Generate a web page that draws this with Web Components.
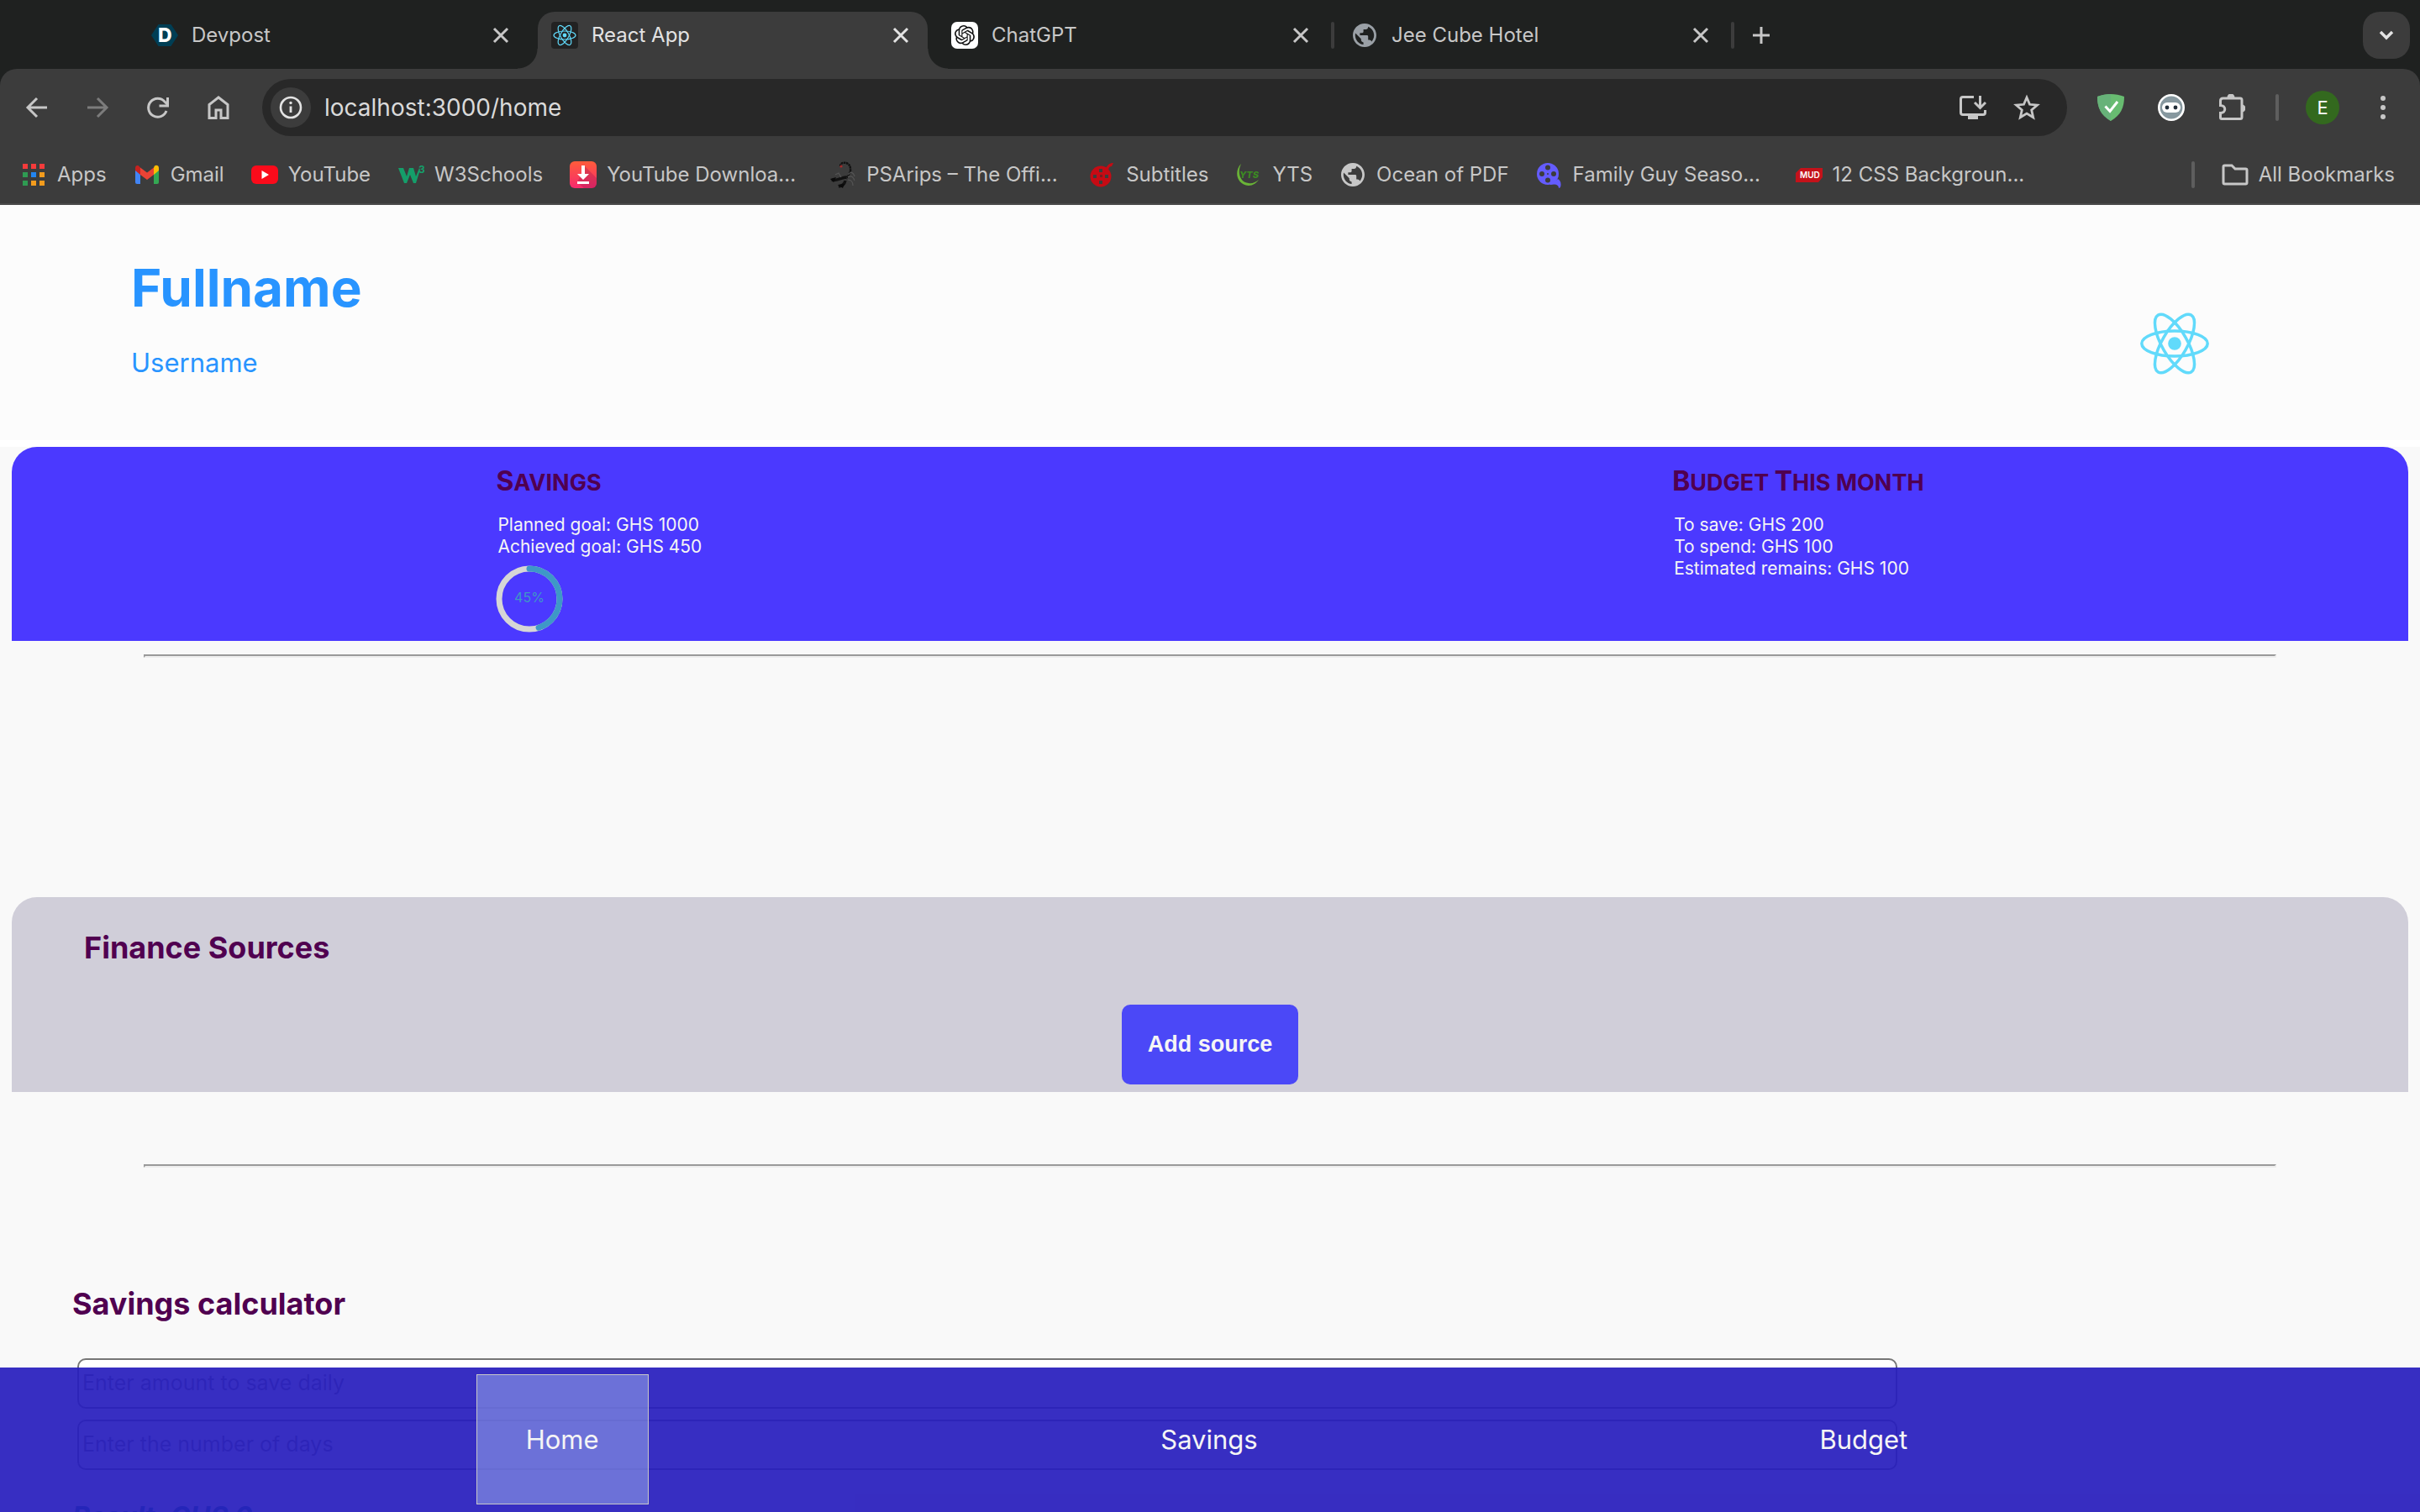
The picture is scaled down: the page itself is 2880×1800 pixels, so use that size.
<!DOCTYPE html>
<html lang="en">
<head>
<meta charset="utf-8">
<title>React App</title>
<style>
    body {
        margin: 0;
        font-family: Inter, "Liberation Sans", sans-serif;
        background: #f9f9f9;
    }
</style>
</head>
<body>
<app-window>
    <tab-strip slot="chrome">
        <browser-tab icon="devpost" label="Devpost"></browser-tab>
        <tab-divider></tab-divider>
        <browser-tab icon="react" label="React App" active></browser-tab>
        <tab-divider></tab-divider>
        <browser-tab icon="chatgpt" label="ChatGPT"></browser-tab>
        <tab-divider visible></tab-divider>
        <browser-tab icon="globe" label="Jee Cube Hotel"></browser-tab>
        <tab-divider visible></tab-divider>
    </tab-strip>
    <browser-toolbar slot="chrome" url="localhost:3000/home"></browser-toolbar>
    <bookmark-bar slot="chrome">
        <bookmark-link icon="apps">Apps</bookmark-link>
        <bookmark-link icon="gmail">Gmail</bookmark-link>
        <bookmark-link icon="youtube">YouTube</bookmark-link>
        <bookmark-link icon="w3">W3Schools</bookmark-link>
        <bookmark-link icon="downloader" clipped>YouTube Downloa...</bookmark-link>
        <bookmark-link icon="scorpion" clipped>PSArips – The Offi...</bookmark-link>
        <bookmark-link icon="subtitles">Subtitles</bookmark-link>
        <bookmark-link icon="yts">YTS</bookmark-link>
        <bookmark-link icon="globe">Ocean of PDF</bookmark-link>
        <bookmark-link icon="reel" clipped>Family Guy Seaso...</bookmark-link>
        <bookmark-link icon="muo" clipped>12 CSS Backgroun...</bookmark-link>
        <bookmark-link icon="folder" slot="end">All Bookmarks</bookmark-link>
    </bookmark-bar>

    <profile-header fullname="Fullname" username="Username"></profile-header>
    <summary-card>
        <summary-section header="Savings">
            <li>Planned goal: GHS 1000</li>
            <li>Achieved goal: GHS 450</li>
            <progress-ring slot="extra" value="45"></progress-ring>
        </summary-section>
        <summary-section header="Budget This month">
            <li>To save: GHS 200</li>
            <li>To spend: GHS 100</li>
            <li>Estimated remains: GHS 100</li>
        </summary-section>
    </summary-card>
    <page-rule></page-rule>
    <finance-sources></finance-sources>
    <page-rule class="second"></page-rule>
    <savings-calculator></savings-calculator>

    <bottom-nav slot="nav"></bottom-nav>
</app-window>

<script>
const atom = (rx, ry, stroke, r) => `
    <g fill="none" stroke="#61dafb" stroke-width="${stroke}">
        <ellipse rx="${rx}" ry="${ry}"/>
        <ellipse rx="${rx}" ry="${ry}" transform="rotate(60)"/>
        <ellipse rx="${rx}" ry="${ry}" transform="rotate(120)"/>
    </g>
    <circle r="${r}" fill="#61dafb"/>`;

// every icon is drawn on a 32 x 32 grid
const icons = {
    back: '<path d="M28 16H6M16 5 5 16l11 11" fill="none" stroke="currentColor" stroke-width="3"/>',
    forward: '<path d="M4 16h22M16 5l11 11-11 11" fill="none" stroke="currentColor" stroke-width="3"/>',
    reload: '<path d="M26 20a11 11 0 1 1-2-11l3 3" fill="none" stroke="currentColor" stroke-width="3"/><path d="M27.5 4v10h-10" fill="none" stroke="currentColor" stroke-width="3"/>',
    home: '<path d="M5 28.5V12.5L16 4l11 8.5v16h-8V19h-6v9.5z" fill="none" stroke="currentColor" stroke-width="3"/>',
    info: '<circle cx="16" cy="16" r="12" fill="none" stroke="currentColor" stroke-width="2.6"/><path d="M16 14.5v7.5" stroke="currentColor" stroke-width="2.8"/><circle cx="16" cy="10.5" r="1.7" fill="currentColor"/>',
    install: '<path d="M17 3.5H4Q1.5 3.5 1.5 6v16q0 2.5 2.5 2.5h24q2.5 0 2.5-2.5v-3" fill="none" stroke="currentColor" stroke-width="3"/><path d="M10 24h12v6H10z" fill="currentColor"/><path d="M24.5 2v13M18 10l6.5 6.5L31 10" fill="none" stroke="currentColor" stroke-width="3"/>',
    star: '<path d="m16 4 3.5 8.3 9 .8-6.8 5.9 2 8.8L16 23.1l-7.7 4.7 2-8.8-6.8-5.9 9-.8z" fill="none" stroke="currentColor" stroke-width="2.8"/>',
    shield: '<path d="M16 0c5 0 11 1 16 3 0 13-4 22-16 29C4 25 0 16 0 3 5 1 11 0 16 0z" fill="#68bc71"/><path d="M16 0v32C4 25 0 16 0 3 5 1 11 0 16 0z" fill="#67b279"/><path d="m9.5 14.5 5.5 6L24 9" fill="none" stroke="#fff" stroke-width="3"/>',
    bot: '<circle cx="16" cy="16" r="14.7" fill="#87989f" stroke="#fff" stroke-width="2.6"/><rect x="5" y="10" width="22" height="12" rx="6" fill="#fff"/><circle cx="11" cy="16" r="2.4" fill="#222f3a"/><circle cx="21" cy="16" r="2.4" fill="#222f3a"/>',
    puzzle: '<path d="M11 5H5.5Q2.5 5 2.5 8v5.500c7 0 7 9 0 9V28q0 1.500 1.500 1.500h22q2 0 2-2V7q0-2-2-2H11" fill="none" stroke="currentColor" stroke-width="3"/><path d="M10.5 4a4.500 4.500 0 0 1 9 0zM28 12.500a4.500 4.500 0 0 1 0 9z" fill="currentColor"/>',
    more: '<g fill="currentColor"><circle cx="16" cy="5" r="3"/><circle cx="16" cy="16" r="3"/><circle cx="16" cy="27" r="3"/></g>',
    close: '<path d="m8 8 16 16M24 8 8 24" stroke="currentColor" stroke-width="3"/>',
    plus: '<path d="M16 6v20M6 16h20" stroke="currentColor" stroke-width="3"/>',
    chevron: '<path d="m9 12 7 7 7-7" fill="none" stroke="currentColor" stroke-width="3.5"/>',
    devpost: '<path d="M8.5 3h15L32 16l-8.500 13h-15L0 16z" fill="#003e54"/><text x="8" y="24" font-size="23" font-weight="800" fill="#fff">D</text>',
    react: `<rect width="32" height="32" rx="4" fill="#222"/><g transform="translate(16 16)">${atom(13, 5, 1.2, 2.4)}</g>`,
    chatgpt: '<rect width="32" height="32" rx="7" fill="#fff"/><path transform="translate(4 4)" d="M22.2819 9.8211a5.9847 5.9847 0 0 0-.5157-4.9108 6.0462 6.0462 0 0 0-6.5098-2.9A6.0651 6.0651 0 0 0 4.9807 4.1818a5.9847 5.9847 0 0 0-3.9977 2.9 6.0462 6.0462 0 0 0 .7427 7.0966 5.98 5.98 0 0 0 .511 4.9107 6.051 6.051 0 0 0 6.5146 2.9001A5.9847 5.9847 0 0 0 13.2599 24a6.0557 6.0557 0 0 0 5.7718-4.2058 5.9894 5.9894 0 0 0 3.9977-2.9001 6.0557 6.0557 0 0 0-.7475-7.0729zm-9.022 12.6081a4.4755 4.4755 0 0 1-2.8764-1.0408l.1419-.0804 4.7783-2.7582a.7948.7948 0 0 0 .3927-.6813v-6.7369l2.02 1.1686a.071.071 0 0 1 .038.052v5.5826a4.504 4.504 0 0 1-4.4945 4.4944zm-9.6607-4.1254a4.4708 4.4708 0 0 1-.5346-3.0137l.142.0852 4.783 2.7582a.7712.7712 0 0 0 .7806 0l5.8428-3.3685v2.3324a.0804.0804 0 0 1-.0332.0615L9.74 19.9502a4.4992 4.4992 0 0 1-6.1408-1.6464zM2.3408 7.8956a4.485 4.485 0 0 1 2.3655-1.9728V11.6a.7664.7664 0 0 0 .3879.6765l5.8144 3.3543-2.0201 1.1685a.0757.0757 0 0 1-.071 0l-4.8303-2.7865A4.504 4.504 0 0 1 2.3408 7.872zm16.5963 3.8558L13.1038 8.364 15.1192 7.2a.0757.0757 0 0 1 .071 0l4.8303 2.7913a4.4944 4.4944 0 0 1-.6765 8.1042v-5.6772a.79.79 0 0 0-.407-.667zm2.0107-3.0231l-.142-.0852-4.7735-2.7818a.7759.7759 0 0 0-.7854 0L9.409 9.2297V6.8974a.0662.0662 0 0 1 .0284-.0615l4.8303-2.7866a4.4992 4.4992 0 0 1 6.6802 4.66zM8.3065 12.863l-2.02-1.1638a.0804.0804 0 0 1-.038-.0567V6.0742a4.4992 4.4992 0 0 1 7.3757-3.4537l-.142.0805L8.704 5.459a.7948.7948 0 0 0-.3927.6813zm1.0976-2.3654l2.602-1.4998 2.6069 1.4998v2.9994l-2.5974 1.4997-2.6067-1.4997Z" fill="#111"/>',
    globe: '<path transform="translate(-.8 -.8) scale(1.4)" fill="currentColor" d="M12 2C6.48 2 2 6.48 2 12s4.48 10 10 10 10-4.48 10-10S17.52 2 12 2zm-1 17.93c-3.95-.49-7-3.85-7-7.93 0-.62.08-1.21.21-1.79L9 15v1c0 1.1.9 2 2 2v1.93zm6.9-2.54c-.26-.81-1-1.39-1.9-1.39h-1v-3c0-.55-.45-1-1-1H8v-2h2c.55 0 1-.45 1-1V7h2c1.1 0 2-.9 2-2v-.41c2.93 1.19 5 4.06 5 7.41 0 2.08-.8 3.97-2.1 5.39z"/>',
    apps: '<path d="M3 3h6v6H3zM13 3h6v6h-6zM23 3h6v6h-6z" fill="#f53b3b"/><path d="M3 13h6v6H3zM3 23h6v6H3z" fill="#2f9b52"/><path d="M13 13h6v6h-6z" fill="#2285f2"/><path d="M23 13h6v6h-6zM13 23h6v6h-6zM23 23h6v6h-6z" fill="#f29b1d"/>',
    gmail: '<path d="M2 9v16q0 2 2 2h4V13z" fill="#4285f4"/><path d="M24 27h4q2 0 2-2V9l-6 4z" fill="#34a853"/><path d="M24 7.5V16l6-5V8c0-3-3-4-5-2.500z" fill="#fbbc04"/><path d="M8 16V7.5l8 6 8-6V16l-8 6z" fill="#ea4335"/><path d="M2 8v3l6 5V7.5L7 6.5C5 4 2 5 2 8z" fill="#c5221f"/>',
    youtube: '<rect y="5" width="32" height="22" rx="6" fill="#fb0b1b"/><path d="M12.5 11v10l8.500-5z" fill="#fff"/>',
    w3: '<path d="M1 8h6l4 10 3-10h5l3 10 4-10 1 2-5 16h-3l-4-10-4 10H8z" fill="#159e6a"/><text x="25" y="14" font-size="12" font-weight="700" fill="#159e6a">3</text>',
    downloader: '<defs><linearGradient id="g" x2="0" y2="1"><stop stop-color="#ff5c3a"/><stop offset="1" stop-color="#f52a6e"/></linearGradient></defs><rect width="32" height="32" rx="6" fill="url(#g)"/><path d="m18 6 14 14v6q0 6-6 6h-9l-8-7z" fill="#a01850" opacity=".35"/><path d="M14 5h4v10h5l-7 7-7-7h5z" fill="#fff"/><path d="M9 24h14v3H9z" fill="#fff"/>',
    scorpion: '<g fill="none" stroke="#111"><path d="M13 6c0-6 11-6 12 2 1 6-3 8-5 13" stroke-width="2.4" stroke-dasharray="2.5 .6"/><path d="M20 19c-6 0-10 5-17 3M19 23c-1 5-4 6-8 7" stroke-width="3.5"/><path d="M22 16c4-5 7-2 8 2M22 19c5-3 7 1 8 4M22 22c3 0 6 2 6 7M14 19l-3-5-4 2" stroke="#555" stroke-width="1.2"/></g><path d="m1 21 7-2-3 6zM10 28l8-1-2 5z" fill="#0a0a0a"/><circle cx="14" cy="6" r="1.6" fill="#a52a2a"/>',
    subtitles: '<circle cx="14" cy="18" r="12.5" fill="#c50b14"/><path d="M20 8q4-7 9-6l-2 4q-3 0-4 4z" fill="#c50b14"/><path d="M12 9h4v4h-4zM12 23h4v4h-4zM5 16h4v4H5zM19 16h4v4h-4z" fill="#3c3c3c"/><path d="M13 16h3v3h-3z" fill="#7c1a1e"/>',
    yts: '<path d="M7 3c-9 9-5 25 9 26 5 0 9-3 12-7-4 3-8 5-12 4C6 25 2 14 7 3z" fill="#6ab437"/><text x="5" y="20" font-size="11" font-weight="800" font-style="italic" fill="#3b8a22">YTS</text>',
    reel: '<circle cx="14" cy="15" r="13" fill="#645cff"/><g fill="#3c3c3c"><circle cx="14" cy="7.5" r="3"/><circle cx="14" cy="22.5" r="3"/><circle cx="7" cy="15" r="3"/><circle cx="21" cy="15" r="3"/><circle cx="14" cy="15" r="1"/></g><path d="M17 25q6-1 9-4 5 3 3 10l-2 1q0-6-10-4z" fill="#645cff"/>',
    muo: '<path d="M6 8h26v11l-5 6H0V14z" fill="#c4121a"/><text x="5" y="20" font-size="10" font-weight="600" fill="#fff">MUD</text>',
    folder: '<path d="M2 6.5q0-1.500 1.500-1.500H12l4 4h12.500q1.500 0 1.500 1.500v15q0 1.500-1.500 1.500h-25Q2 27 2 25.500z" fill="none" stroke="currentColor" stroke-width="3"/>'
};

class AppIcon extends HTMLElement {
    constructor() {
        super();
        this.attachShadow({ mode: 'open' });
    }

    connectedCallback() {
        this.shadowRoot.innerHTML = `
            <style>
                :host { display: block; flex: none; width: 32px; height: 32px; }
                svg { display: block; width: 100%; height: 100%; }
            </style>
            <svg viewBox="0 0 32 32" aria-hidden="true">${icons[this.getAttribute('name')]}</svg>
        `;
    }
}
customElements.define('app-icon', AppIcon);

class AppWindow extends HTMLElement {
    constructor() {
        super();
        this.attachShadow({ mode: 'open' });
        this.shadowRoot.innerHTML = `
            <style>
                :host {
                    display: flex;
                    flex-direction: column;
                    height: 100vh;
                    overflow: hidden;
                }
                .page {
                    position: relative;
                    flex: 1;
                    min-height: 0;
                    display: flex;
                    flex-direction: column;
                }
                main { flex: 1; min-height: 0; overflow: hidden; }
            </style>
            <slot name="chrome"></slot>
            <div class="page">
                <main><slot></slot></main>
                <slot name="nav"></slot>
            </div>
        `;
    }
}
customElements.define('app-window', AppWindow);

class TabStrip extends HTMLElement {
    constructor() {
        super();
        this.attachShadow({ mode: 'open' });
        this.shadowRoot.innerHTML = `
            <style>
                :host {
                    display: flex;
                    background: #1f2120;
                    color: #c7c7c7;
                    padding: 14px 12px 0 164px;
                }
                button {
                    display: flex;
                    align-items: center;
                    justify-content: center;
                    border: 0;
                    padding: 0;
                    background: none;
                    color: inherit;
                    width: 56px;
                    height: 56px;
                    border-radius: 20px;
                }
                .menu { margin-left: auto; background: #3c3c3c; color: #e3e3e3; }
            </style>
            <slot></slot>
            <button aria-label="New tab"><app-icon name="plus"></app-icon></button>
            <button class="menu" aria-label="Search tabs"><app-icon name="chevron"></app-icon></button>
        `;
    }
}
customElements.define('tab-strip', TabStrip);

class TabDivider extends HTMLElement {
    constructor() {
        super();
        this.attachShadow({ mode: 'open' });
        this.shadowRoot.innerHTML = `
            <style>
                :host { display: flex; flex: none; justify-content: center; align-items: center; width: 12px; height: 56px; }
                span { width: 4px; height: 32px; border-radius: 2px; }
                :host([visible]) span { background: #3c3c3c; }
            </style>
            <span></span>
        `;
    }
}
customElements.define('tab-divider', TabDivider);

class BrowserTab extends HTMLElement {
    constructor() {
        super();
        this.attachShadow({ mode: 'open' });
    }

    connectedCallback() {
        this.shadowRoot.innerHTML = `
            <style>
                :host {
                    position: relative;
                    display: flex;
                    align-items: center;
                    gap: 16px;
                    flex: 0 1 464px;
                    height: 68px;
                    padding: 0 16px 12px;
                    box-sizing: border-box;
                    font-size: 24px;
                    line-height: 32px;
                    color: #9aa0a6;
                }
                span { flex: 1; color: #c7c7c7; }
                button { display: flex; border: 0; padding: 0; background: none; color: #c7c7c7; }
                :host([active]) { background: #3c3c3c; border-radius: 20px 20px 0 0; }
                :host([active]) span, :host([active]) button { color: #e3e3e3; }
                /* flared feet of the selected tab */
                :host([active])::before, :host([active])::after {
                    content: "";
                    position: absolute;
                    bottom: 0;
                    width: 24px;
                    height: 24px;
                }
                :host([active])::before {
                    right: 100%;
                    background: radial-gradient(circle at 0 0, transparent 23px, #3c3c3c 24px);
                }
                :host([active])::after {
                    left: 100%;
                    background: radial-gradient(circle at 100% 0, transparent 23px, #3c3c3c 24px);
                }
            </style>
            <app-icon name="${this.getAttribute('icon')}"></app-icon>
            <span>${this.getAttribute('label')}</span>
            <button aria-label="Close tab"><app-icon name="close"></app-icon></button>
        `;
    }
}
customElements.define('browser-tab', BrowserTab);

class BrowserToolbar extends HTMLElement {
    constructor() {
        super();
        this.attachShadow({ mode: 'open' });
    }

    connectedCallback() {
        this.shadowRoot.innerHTML = `
            <style>
                :host { display: block; background: #1f2120; }
                .bar {
                    display: flex;
                    align-items: center;
                    gap: 24px;
                    padding: 12px 20px 0;
                    background: #3c3c3c;
                    border-radius: 20px 20px 0 0;
                    color: #c7c7c7;
                }
                button {
                    display: flex;
                    align-items: center;
                    justify-content: center;
                    flex: none;
                    width: 48px;
                    height: 48px;
                    border: 0;
                    padding: 0;
                    background: none;
                    color: inherit;
                }
                button:disabled { color: #7c7c7c; }
                .address {
                    flex: 1;
                    display: flex;
                    align-items: center;
                    gap: 16px;
                    height: 68px;
                    margin: 0 4px;
                    padding: 0 24px 0 10px;
                    box-sizing: border-box;
                    border-radius: 34px;
                    background: #282828;
                }
                .address .site { background: #3c3c3c; border-radius: 50%; color: #e3e3e3; }
                input {
                    flex: 1;
                    min-width: 0;
                    border: 0;
                    padding: 0;
                    background: none;
                    color: #dadada;
                    font: inherit;
                    font-size: 28px;
                }
                .divider { width: 4px; height: 32px; margin: 0 4px; border-radius: 2px; background: #5e5e5e; }
                .avatar {
                    width: 40px;
                    height: 40px;
                    margin: 0 4px;
                    border-radius: 50%;
                    background: #33691e;
                    color: #fff;
                    font: inherit;
                    font-size: 22px;
                }
            </style>
            <div class="bar">
                <button aria-label="Back"><app-icon name="back"></app-icon></button>
                <button aria-label="Forward" disabled><app-icon name="forward"></app-icon></button>
                <button aria-label="Reload"><app-icon name="reload"></app-icon></button>
                <button aria-label="Home"><app-icon name="home"></app-icon></button>
                <div class="address">
                    <button class="site" aria-label="Site information"><app-icon name="info"></app-icon></button>
                    <input aria-label="Address" value="${this.getAttribute('url')}">
                    <button aria-label="Install app"><app-icon name="install"></app-icon></button>
                    <button aria-label="Bookmark this page"><app-icon name="star"></app-icon></button>
                </div>
                <button aria-label="Ad blocker"><app-icon name="shield"></app-icon></button>
                <button aria-label="Privacy extension"><app-icon name="bot"></app-icon></button>
                <button aria-label="Extensions"><app-icon name="puzzle"></app-icon></button>
                <span class="divider"></span>
                <button class="avatar">E</button>
                <button aria-label="Menu"><app-icon name="more"></app-icon></button>
            </div>
        `;
    }
}
customElements.define('browser-toolbar', BrowserToolbar);

class BookmarkBar extends HTMLElement {
    constructor() {
        super();
        this.attachShadow({ mode: 'open' });
        this.shadowRoot.innerHTML = `
            <style>
                :host {
                    display: flex;
                    align-items: center;
                    gap: 32px;
                    height: 68px;
                    padding: 12px 30px 0 24px;
                    border-bottom: 2px solid #4a4a4a;
                    background: #3c3c3c;
                    color: #c7c7c7;
                    font-size: 24px;
                    line-height: 32px;
                }
                .end { display: flex; gap: 32px; margin-left: auto; }
                .divider { width: 4px; height: 32px; border-radius: 2px; background: #5e5e5e; }
            </style>
            <slot></slot>
            <div class="end">
                <span class="divider"></span>
                <slot name="end"></slot>
            </div>
        `;
    }
}
customElements.define('bookmark-bar', BookmarkBar);

class BookmarkLink extends HTMLElement {
    constructor() {
        super();
        this.attachShadow({ mode: 'open' });
        this.shadowRoot.innerHTML = `
            <style>
                :host { display: block; flex: none; }
                a { display: flex; gap: 12px; color: inherit; text-decoration: none; white-space: nowrap; }
                :host([clipped]) a { width: 277px; }
            </style>
            <a href="#"><app-icon name="${this.getAttribute('icon')}"></app-icon><slot></slot></a>
        `;
    }
}
customElements.define('bookmark-link', BookmarkLink);

class ProfileHeader extends HTMLElement {
    constructor() {
        super();
        this.attachShadow({ mode: 'open' });
    }

    connectedCallback() {
        this.shadowRoot.innerHTML = `
            <style>
                :host {
                    display: flex;
                    justify-content: space-between;
                    align-items: flex-end;
                    padding: 59px 250px 72px 156px;
                    background: #fcfcfc;
                    border-bottom: 8px solid #fff;
                    color: #2894ff;
                }
                h1 { margin: 0 0 29px; font-size: 62px; line-height: 80px; }
                p { margin: 0; font-size: 31px; line-height: 40px; }
                svg { display: block; width: 84px; height: 86px; }
            </style>
            <div>
                <h1>${this.getAttribute('fullname')}</h1>
                <p>${this.getAttribute('username')}</p>
            </div>
            <svg viewBox="-42 -43 84 86" role="img" aria-label="logo">${atom(39.2, 15, 3.5, 7.8)}</svg>
        `;
    }
}
customElements.define('profile-header', ProfileHeader);

class SummaryCard extends HTMLElement {
    constructor() {
        super();
        this.attachShadow({ mode: 'open' });
        this.shadowRoot.innerHTML = `
            <style>
                :host {
                    display: flex;
                    justify-content: space-around;
                    margin: 0 14px;
                    padding: 21px 0 10px;
                    border-radius: 30px 30px 0 0;
                    background: #4b39ff;
                }
            </style>
            <slot></slot>
        `;
    }
}
customElements.define('summary-card', SummaryCard);

class SummarySection extends HTMLElement {
    constructor() {
        super();
        this.attachShadow({ mode: 'open' });
    }

    connectedCallback() {
        // small caps: only words that start with a capital get the tall first letter
        const words = this.getAttribute('header').split(' ').map(word =>
            `<span class="${/^[A-Z]/.test(word) ? 'cap' : ''}">${word}</span>`);
        this.shadowRoot.innerHTML = `
            <style>
                :host { display: block; }
                h3 {
                    margin: 0 0 17px;
                    font-size: 27px;
                    line-height: 40px;
                    text-transform: uppercase;
                    color: #500050;
                }
                h3 span { display: inline-block; }
                h3 .cap::first-letter { font-size: 32px; }
                ul {
                    list-style: none;
                    margin: 0 0 9px;
                    padding: 0 2px;
                    color: #f5f5f5;
                    font-size: 21px;
                    line-height: 26px;
                }
            </style>
            <h3>${words.join(' ')}</h3>
            <ul><slot></slot></ul>
            <slot name="extra"></slot>
        `;
    }
}
customElements.define('summary-section', SummarySection);

class ProgressRing extends HTMLElement {
    constructor() {
        super();
        this.attachShadow({ mode: 'open' });
    }

    connectedCallback() {
        const value = this.getAttribute('value');
        this.shadowRoot.innerHTML = `
            <style>
                :host { display: block; }
                svg { display: block; width: 80px; height: 80px; }
                circle { fill: none; stroke-width: 7; }
            </style>
            <svg viewBox="0 0 80 80" role="img" aria-label="${value} percent saved">
                <circle cx="40" cy="40" r="36" stroke="#d6d6d6"/>
                <circle cx="40" cy="40" r="36" stroke="#3e98c7" pathLength="100" stroke-dasharray="${value} 100"
                    stroke-linecap="round" transform="rotate(-90 40 40)"/>
                <text x="40" y="44" text-anchor="middle" font-size="16" fill="#3e98c7">${value}%</text>
            </svg>
        `;
    }
}
customElements.define('progress-ring', ProgressRing);

class PageRule extends HTMLElement {
    constructor() {
        super();
        this.attachShadow({ mode: 'open' });
        this.shadowRoot.innerHTML = `
            <style>
                :host { display: block; padding: 16px 171px 285px; }
                :host(.second) { padding: 86px 171px 140px; }
                hr { margin: 0; border: 2px solid; border-color: #9a9a9a #eee #eee #9a9a9a; }
            </style>
            <hr>
        `;
    }
}
customElements.define('page-rule', PageRule);

class FinanceSources extends HTMLElement {
    constructor() {
        super();
        this.attachShadow({ mode: 'open' });
        this.shadowRoot.innerHTML = `
            <style>
                :host {
                    display: flex;
                    flex-direction: column;
                    margin: 0 14px;
                    padding: 38px 86px 9px;
                    border-radius: 30px 30px 0 0;
                    background: #d0ced9;
                }
                h2 { margin: 0 0 46px; font-size: 36px; line-height: 44px; color: #500050; }
                button {
                    align-self: center;
                    padding: 32px 31px;
                    border: 0;
                    border-radius: 10px;
                    background: #4b48f7;
                    color: #f5f5f5;
                    font: bold 27px/31px "Liberation Sans", sans-serif;
                }
            </style>
            <h2>Finance Sources</h2>
            <button>Add source</button>
        `;
    }
}
customElements.define('finance-sources', FinanceSources);

class SavingsCalculator extends HTMLElement {
    constructor() {
        super();
        this.attachShadow({ mode: 'open' });
        this.shadowRoot.innerHTML = `
            <style>
                :host { display: block; padding: 0 80px 0 86px; }
                h2 { margin: 0 0 43px; font-size: 36px; line-height: 44px; color: #500050; }
                form { display: flex; flex-direction: column; gap: 13px; padding-left: 6px; margin-bottom: 36px; }
                input {
                    width: 80%;
                    height: 60px;
                    box-sizing: border-box;
                    padding: 0 4px 2px;
                    border: 2px solid #767676;
                    border-radius: 10px;
                    background: #fff;
                    font: inherit;
                    font-size: 25px;
                }
                input::placeholder { color: #757575; }
                output { display: block; font-size: 32px; line-height: 40px; font-weight: bold; font-style: italic; color: #008080; }
            </style>
            <h2>Savings calculator</h2>
            <form>
                <input aria-label="Daily amount" placeholder="Enter amount to save daily">
                <input aria-label="Number of days" placeholder="Enter the number of days">
            </form>
            <output>Result: GHS 0</output>
        `;
    }
}
customElements.define('savings-calculator', SavingsCalculator);

class BottomNav extends HTMLElement {
    constructor() {
        super();
        this.attachShadow({ mode: 'open' });
        this.shadowRoot.innerHTML = `
            <style>
                :host {
                    position: absolute;
                    left: 0;
                    right: 0;
                    bottom: 0;
                    background: rgba(40, 30, 189, .93);
                }
                nav { display: flex; justify-content: space-evenly; padding: 8px 0 9px 16px; }
                a {
                    padding: 58px;
                    border: 1px solid transparent;
                    color: #f5f5f5;
                    font-size: 31px;
                    line-height: 37px;
                    text-decoration: none;
                }
                a.active { background: rgba(173, 193, 241, .46); border-color: #c8c8c8; }
            </style>
            <nav>
                <a class="active" href="#home">Home</a>
                <a href="#savings">Savings</a>
                <a href="#budget">Budget</a>
            </nav>
        `;
    }
}
customElements.define('bottom-nav', BottomNav);
</script>
</body>
</html>
